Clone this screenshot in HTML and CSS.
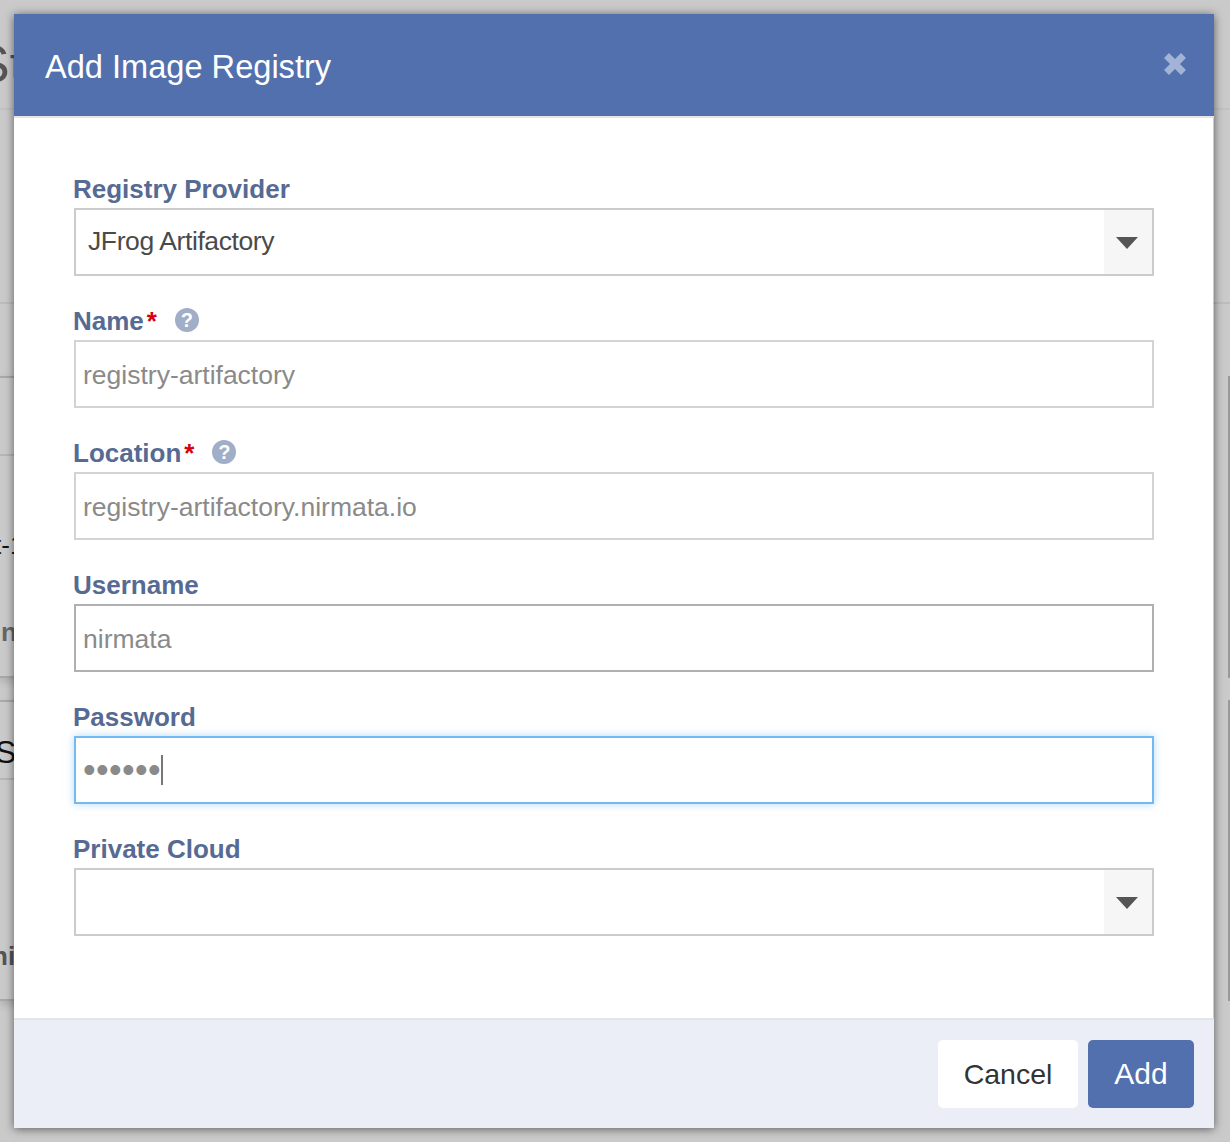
FILE: index.html
```html
<!DOCTYPE html>
<html lang="en">
<head>
<meta charset="utf-8">
<title>Add Image Registry</title>
<link rel="stylesheet" href="styles.css">
</head>
<body>
<div class="backdrop">
  <div class="bg-head"><span class="bg-title">St</span></div>
  <div class="bg-sub"></div>
  <div class="bg-spacer"></div>
  <div class="bg-pane bg-pane-a">
    <div class="bg-card">
      <div class="bg-row-top"></div>
      <div class="bg-row-a">
        <span class="bg-text-dash">t-1</span>
        <span class="bg-text-n">n</span>
      </div>
    </div>
  </div>
  <div class="bg-pane bg-pane-b">
    <div class="bg-card">
      <div class="bg-row-s"><span class="bg-text-s">S</span></div>
      <div class="bg-row-b"><span class="bg-text-ni">ni</span></div>
    </div>
  </div>
</div>

<div class="modal">
  <header class="modal-head">
    <h1 class="modal-title">Add Image Registry</h1>
    <svg class="close" viewBox="0 0 24 24" width="24" height="24" aria-label="Close">
      <path d="M3.5 3.5 20.5 20.5M20.5 3.5 3.5 20.5"/>
    </svg>
  </header>
  <form class="modal-body">
    <div class="field">
      <label class="label">Registry Provider</label>
      <div class="select">
        <span class="select-value">JFrog Artifactory</span>
        <span class="select-arrow"><svg viewBox="0 0 22 12" width="22" height="12"><path d="M0 0H22L11 12Z"/></svg></span>
      </div>
    </div>
    <div class="field">
      <label class="label">Name<span class="req">*</span><span class="help">?</span></label>
      <div class="input">registry-artifactory</div>
    </div>
    <div class="field">
      <label class="label">Location<span class="req">*</span><span class="help">?</span></label>
      <div class="input">registry-artifactory.nirmata.io</div>
    </div>
    <div class="field">
      <label class="label">Username</label>
      <div class="input input-hover">nirmata</div>
    </div>
    <div class="field">
      <label class="label">Password</label>
      <div class="input input-focus"><span class="dots">••••••</span><span class="caret"></span></div>
    </div>
    <div class="field">
      <label class="label">Private Cloud</label>
      <div class="select">
        <span class="select-value"></span>
        <span class="select-arrow"><svg viewBox="0 0 22 12" width="22" height="12"><path d="M0 0H22L11 12Z"/></svg></span>
      </div>
    </div>
  </form>
  <footer class="modal-foot">
    <button type="button" class="btn btn-cancel">Cancel</button>
    <button type="button" class="btn btn-add">Add</button>
  </footer>
</div>
</body>
</html>
```
FILE: styles.css
```css
* { box-sizing: border-box; }
html, body { margin: 0; padding: 0; }
body {
  width: 1230px;
  height: 1142px;
  overflow: hidden;
  position: relative;
  font-family: "Liberation Sans", Arial, sans-serif;
  background: #cacaca;
}

/* dimmed page behind the dialog */
.backdrop {
  position: absolute;
  inset: 0;
  overflow: hidden;
  display: flex;
  flex-direction: column;
  white-space: nowrap;
}
.bg-head {
  height: 110px;
  padding-top: 38px;
  border-bottom: 2px solid #c2c2c2;
}
.bg-title {
  display: block;
  margin-left: -25px;
  font-size: 52px;
  line-height: 52px;
  color: #555;
}
.bg-sub { height: 194px; border-bottom: 2px solid #bdbdbd; }
.bg-spacer { height: 72px; }
.bg-pane {
  padding-right: 24px;
  border-right: 2px solid #999;
}
.bg-pane-a { height: 302px; margin-bottom: 22px; }
.bg-pane-b { height: 301px; }
.bg-card {
  height: 100%;
  box-shadow: 0 4px 8px rgba(0, 0, 0, .14);
  border-bottom: 2px solid #a8a8a8;
}
.bg-row-top {
  height: 80px;
  border-top: 2px solid #a9a9a9;
  border-bottom: 2px solid #b6b6b6;
}
.bg-row-a {
  display: flex;
  flex-direction: column;
  padding-top: 74px;
}
.bg-text-dash {
  margin-left: -6px;
  font-size: 26px;
  line-height: 30px;
  color: #111;
}
.bg-text-n {
  margin-top: 57px;
  margin-left: 1px;
  font-size: 26px;
  line-height: 30px;
  font-weight: bold;
  color: #666;
}
.bg-row-s {
  height: 80px;
  padding-top: 33px;
  border-top: 2px solid #a9a9a9;
  border-bottom: 2px solid #b6b6b6;
}
.bg-text-s {
  display: block;
  margin-left: -5px;
  font-size: 32px;
  line-height: 34px;
  color: #111;
}
.bg-row-b { padding-top: 161px; }
.bg-text-ni {
  display: block;
  margin-left: -8px;
  font-size: 26px;
  line-height: 30px;
  font-weight: bold;
  color: #555;
}

/* dialog */
.modal {
  position: absolute;
  top: 14px;
  left: 14px;
  width: 1200px;
  height: 1114px;
  display: flex;
  flex-direction: column;
  box-shadow: 0 1px 9px rgba(0, 0, 0, .55);
}
.modal-head {
  flex: none;
  height: 104px;
  display: flex;
  align-items: flex-start;
  justify-content: space-between;
  padding: 33px 27px 0 31px;
  background: #5270ae;
  border-bottom: 2px solid #e5e5e5;
}
.modal-title {
  margin: 0;
  font-size: 32.6px;
  line-height: 40px;
  font-weight: normal;
  color: #fff;
}
.close { margin-top: 5px; }
.close path {
  fill: none;
  stroke: #a3b3d6;
  stroke-width: 7;
}
.modal-body {
  flex: 1;
  margin: 0 1px 0 0;
  padding: 55px 59px 0 60px;
  background: #fff;
  display: flex;
  flex-direction: column;
  gap: 29px;
}
.label {
  display: block;
  height: 32px;
  margin: 0 0 3px -1px;
  font-size: 26px;
  line-height: 32px;
  font-weight: bold;
  color: #566a93;
}
.req {
  color: #d8000c;
  margin-left: 3px;
}
.help {
  display: inline-block;
  width: 24px;
  height: 24px;
  margin-left: 18px;
  border-radius: 50%;
  background: #a0aec8;
  color: #fff;
  font-size: 20px;
  line-height: 24px;
  font-weight: bold;
  text-align: center;
  vertical-align: 3px;
}
.input {
  height: 68px;
  padding: 2px 0 0 7px;
  border: 2px solid #d3d3d3;
  font-size: 26.5px;
  line-height: 62px;
  color: #8a8a8a;
  background: #fff;
  white-space: nowrap;
}
.input-hover { border-color: #b0b0b0; }
.input-focus {
  display: flex;
  align-items: center;
  padding: 0 0 0 7px;
  border-color: #74b9ef;
  box-shadow: 0 0 8px rgba(116, 185, 239, .55);
}
.dots {
  font-size: 36px;
  line-height: 64px;
  letter-spacing: .4px;
}
.caret {
  width: 2px;
  height: 30px;
  background: #777;
}
.select {
  height: 68px;
  display: flex;
  border: 2px solid #ccc;
  background: #fff;
}
.select-value {
  flex: 1;
  padding-left: 12px;
  font-size: 26.5px;
  line-height: 62px;
  letter-spacing: -.4px;
  color: #4a4a4a;
}
.select-arrow {
  flex: none;
  width: 48px;
  display: flex;
  align-items: flex-start;
  justify-content: center;
  padding: 27px 2px 0 0;
  background: #f6f6f6;
}
.select-arrow path { fill: #555; }
.modal-foot {
  flex: none;
  height: 110px;
  display: flex;
  justify-content: flex-end;
  gap: 10px;
  padding: 20px 20px 0 0;
  background: #ebeef6;
  border-top: 2px solid #e5e5e5;
}
.btn {
  height: 68px;
  padding: 0;
  border: 0;
  border-radius: 5px;
  font-family: inherit;
  font-size: 30px;
  line-height: 68px;
}
.btn-cancel { width: 140px; background: #fff; color: #333; font-size: 28.5px; }
.btn-add { width: 106px; background: #5270ae; color: #fff; }
```
